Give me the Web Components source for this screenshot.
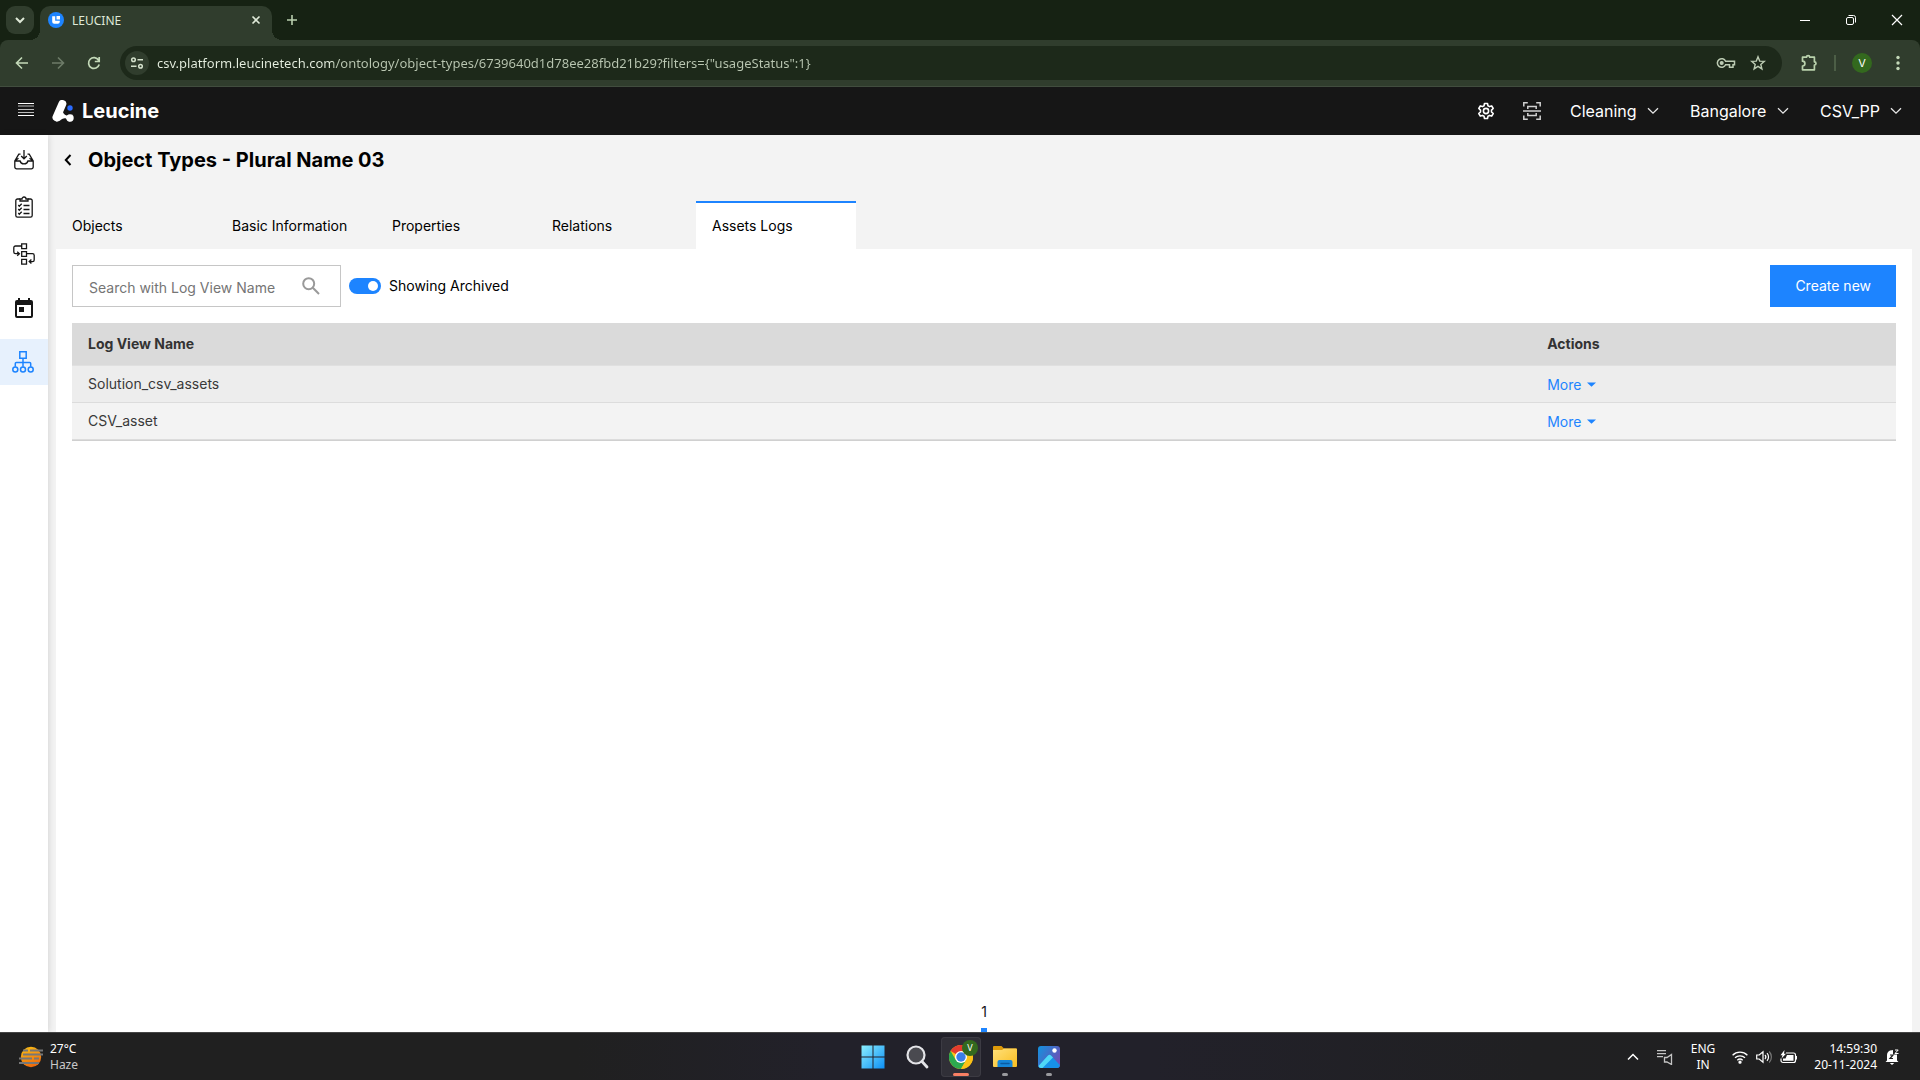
<!DOCTYPE html>
<html lang="en">
<head>
<meta charset="utf-8">
<title>LEUCINE</title>
<style>
  html, body { margin: 0; height: 100%; }
  body { display: flex; flex-direction: column; overflow: hidden; background: #162213; font-family: Inter, "Liberation Sans", sans-serif; font-size: 14px; line-height: 20px; color: #000; }
</style>
</head>
<body>
<browser-tabs></browser-tabs>
<browser-toolbar></browser-toolbar>
<app-shell>
  <app-header slot="header">
    <app-select label="Use case" value="Cleaning"></app-select>
    <app-select label="Facility" value="Bangalore"></app-select>
    <app-select label="Account" value="CSV_PP"></app-select>
  </app-header>
  <side-nav slot="nav"></side-nav>
  <page-heading>Object Types - Plural Name 03</page-heading>
  <tab-bar>
    <tab-item>Objects</tab-item>
    <tab-item>Basic Information</tab-item>
    <tab-item>Properties</tab-item>
    <tab-item>Relations</tab-item>
    <tab-item active>Assets Logs</tab-item>
  </tab-bar>
  <log-panel>
    <filter-bar slot="filters"></filter-bar>
    <log-table rows="Solution_csv_assets|CSV_asset"></log-table>
    <page-numbers slot="footer"></page-numbers>
  </log-panel>
</app-shell>
<task-bar></task-bar>

<script>
const base = `<style>
  :host, *, *::before, *::after { box-sizing: border-box; }
  button, input, select { font: inherit; color: inherit; background: none; border: 0; padding: 0; margin: 0; outline: 0; }
  button { display: inline-flex; align-items: center; justify-content: center; cursor: pointer; }
  svg { display: block; flex: none; }
</style>`;
function define(name, render) {
  customElements.define(name, class extends HTMLElement {
    constructor() {
      super();
      this.attachShadow({ mode: "open" });
    }
    connectedCallback() {
      if (!this.shadowRoot.childNodes.length) this.shadowRoot.innerHTML = base + render(this);
    }
  });
}

define("browser-tabs", () => `<style>
  :host { display: flex; align-items: flex-start; height: 40px; flex: none; background: #162213; font: 12px/18px "Noto Sans", "Open Sans", sans-serif; color: #dfe9d8; }
  .search { width: 28px; height: 28px; margin: 6px 6px 0; border-radius: 9px; background: #303d2d; }
  .tab { position: relative; display: flex; align-items: center; width: 232px; height: 34px; margin-top: 6px; padding: 0 10px 6px 8px; border-radius: 10px 10px 0 0; background: #303d2d; }
  .tab::before, .tab::after { content: ""; position: absolute; bottom: 0; width: 10px; height: 10px; }
  .tab::before { left: -10px; background: radial-gradient(circle at 0 0, transparent 10px, #303d2d 10px); }
  .tab::after { right: -10px; background: radial-gradient(circle at 100% 0, transparent 10px, #303d2d 10px); }
  .name { flex: 1; padding: 1px 0 0 8px; }
  .new { width: 28px; height: 28px; margin: 6px 0 0 6px; }
  .win { display: flex; margin-left: auto; }
  .win button { width: 46px; height: 40px; }
</style>
<button class="search" aria-label="Search tabs"><svg width="10" height="10" viewBox="0 0 10 10" fill="none" stroke="#dfe9d8" stroke-width="2"><path d="M1 3l4 4 4-4"/></svg></button>
<div class="tab">
  <svg width="16" height="16" viewBox="0 0 16 16"><circle cx="8" cy="8" r="8" fill="#1d84ff"/><path d="M4.200 4.200h3v4.600h4.600v1a2 2 0 0 1-2 2h-3.600a2 2 0 0 1-2-2z" fill="#fff"/><path d="M8.500 4h3.500v3.500H8.500z" fill="#fff"/></svg>
  <span class="name">LEUCINE</span>
  <button aria-label="Close tab"><svg width="12" height="12" viewBox="0 0 12 12" fill="none" stroke="#dfe9d8" stroke-width="1.600"><path d="M2.500 2.500l7 7M9.500 2.500l-7 7"/></svg></button>
</div>
<button class="new" aria-label="New tab"><svg width="12" height="12" viewBox="0 0 12 12" fill="none" stroke="#b9cfae" stroke-width="1.600"><path d="M6 1v10M1 6h10"/></svg></button>
<div class="win">
  <button aria-label="Minimise"><svg width="12" height="12" viewBox="0 0 12 12" stroke="#fff"><path d="M1 6.500h10"/></svg></button>
  <button aria-label="Restore"><svg width="12" height="12" viewBox="0 0 12 12" fill="none" stroke="#fff"><rect x="1.500" y="3.500" width="7" height="7" rx="1.500"/><path d="M3.500 1.500h5a2 2 0 0 1 2 2v5"/></svg></button>
  <button aria-label="Close"><svg width="12" height="12" viewBox="0 0 12 12" fill="none" stroke="#fff" stroke-width="1.200"><path d="M1 1l10 10M11 1L1 11"/></svg></button>
</div>`);

define("browser-toolbar", () => `<style>
  :host { display: flex; align-items: center; height: 47px; flex: none; padding: 0 14px 0 4px; background: #303d2d; border-bottom: 1px solid #414d3e; border-radius: 8px 8px 0 0; color: #dfe9d8; font: 14px/20px "Noto Sans", "Open Sans", sans-serif; }
  .nav { width: 36px; height: 34px; }
  .box { flex: 1; display: flex; align-items: center; height: 34px; margin: 0 18px 0 8px; padding: 0 16px 0 5px; border-radius: 17px; background: #1d291a; }
  .site { width: 24px; height: 24px; border-radius: 50%; background: #303d2d; flex: none; }
  input { flex: 1; min-width: 0; height: 24px; margin-left: 8px; font-size: 13px; background: linear-gradient(90deg, #e6efe0 176px, #bac7b2 176px); background-clip: text; -webkit-background-clip: text; -webkit-text-fill-color: transparent; }
  .key { margin-right: 14px; }
  .sep { width: 2px; height: 16px; margin: 0 16px; background: #4c5e46; }
  .me { width: 20px; height: 20px; margin-right: 18px; border-radius: 50%; background: #33691e; color: #fff; font: 11px/20px Inter, sans-serif; }
  .menu { width: 16px; height: 34px; }
</style>
<button class="nav" aria-label="Back"><svg width="14" height="14" viewBox="0 0 14 14" fill="none" stroke="#c3d9b8" stroke-width="1.600"><path d="M13 7H2M7 1.500L1.500 7 7 12.500"/></svg></button>
<button class="nav" aria-label="Forward"><svg width="14" height="14" viewBox="0 0 14 14" fill="none" stroke="#6d7b68" stroke-width="1.600"><path d="M1 7h11M7 1.500L12.500 7 7 12.500"/></svg></button>
<button class="nav" aria-label="Reload"><svg width="14" height="14" viewBox="0 0 14 14" fill="none" stroke="#c3d9b8" stroke-width="1.700"><path d="M12.200 8.500a5.400 5.400 0 1 1-.6-4.300M12.200 1v4.500H7.800"/></svg></button>
<div class="box">
  <button class="site" aria-label="Site information"><svg width="14" height="14" viewBox="0 0 14 14" fill="none" stroke="#d5e2cd" stroke-width="1.500"><circle cx="3.500" cy="3.700" r="1.800"/><path d="M7.500 3.700H13M1 10.300h5.500"/><circle cx="10.500" cy="10.300" r="1.800"/></svg></button>
  <input type="text" aria-label="Address" spellcheck="false" value="csv.platform.leucinetech.com/ontology/object-types/6739640d1d78ee28fbd21b29?filters={&quot;usageStatus&quot;:1}">
  <button class="key" aria-label="Passwords"><svg width="20" height="12" viewBox="0 0 20 12" fill="none" stroke="#bccbb3" stroke-width="1.500"><path d="M9.600 4.300H18.500V7.700H17V10.200H13.500V7.700H9.600A4.300 4.300 0 1 1 9.600 4.300z"/><circle cx="5.700" cy="6" r="1.300" fill="#bccbb3"/></svg></button>
  <button aria-label="Bookmark"><svg width="16" height="16" viewBox="0 0 16 16" fill="none" stroke="#bccbb3" stroke-width="1.400"><path d="M8 1.800l1.700 4.300 4.600.3-3.500 3 1.100 4.500L8 11.400l-3.900 2.500 1.100-4.500-3.500-3 4.600-.3z"/></svg></button>
</div>
<button aria-label="Extensions"><svg width="18" height="18" viewBox="0 0 18 18" fill="none" stroke="#b9d2ac" stroke-width="1.700"><path d="M2.500 3.200H6.500a1.600 1.600 0 0 1 3.200 0h4.700v4.600a1.600 1.600 0 0 1 0 3.200V15.800H2.500V12a2.400 2.400 0 0 0 0-4.800z" stroke-linejoin="round"/></svg></button>
<span class="sep"></span>
<button class="me" aria-label="Profile V">V</button>
<button class="menu" aria-label="Menu"><svg width="4" height="16" viewBox="0 0 4 16" fill="#c3d9b8"><circle cx="2" cy="2.500" r="1.700"/><circle cx="2" cy="8" r="1.700"/><circle cx="2" cy="13.500" r="1.700"/></svg></button>`);

define("app-shell", () => `<style>
  :host { flex: 1; min-height: 0; display: flex; flex-direction: column; background: #f3f3f3; }
  .body { flex: 1; min-height: 0; display: flex; }
  main { flex: 1; min-width: 0; display: flex; flex-direction: column; padding: 0 8px; }
</style>
<slot name="header"></slot>
<div class="body"><slot name="nav"></slot><main><slot></slot></main></div>`);

define("app-header", () => `<style>
  :host { display: flex; align-items: center; height: 48px; flex: none; padding: 0 18px; background: #161616; color: #fff; font-size: 16px; line-height: 24px; }
  .brand { display: flex; align-items: center; gap: 8px; margin-left: 18px; color: #fff; text-decoration: none; font-size: 20px; font-weight: 700; }
  .menu { margin-bottom: 4px; }
  .right { display: flex; align-items: center; gap: 31px; margin-left: auto; }
  .icons { display: flex; gap: 28px; align-items: center; margin-right: -2px; }
</style>
<button class="menu" aria-label="Menu"><svg width="16" height="13" viewBox="0 0 16 13"><path d="M0 .5h16M0 12.500h16" stroke="#fff"/><path d="M0 3h16M0 6.500h16M0 9.500h16" stroke="#bcbcbc"/></svg></button>
<a class="brand" href="#home">
  <svg width="22" height="22" viewBox="0 0 22 22"><path d="M10.300 4L4.500 17.400" stroke="#fff" stroke-width="8" stroke-linecap="round"/><path d="M4 21.500C9 22 9.500 17.500 14 18.500L18 21.800 20.500 14.500C17 17 12 16 10.500 11z" fill="#fff"/><circle cx="18" cy="18" r="3.700" fill="#fff"/><circle cx="18" cy="8" r="2.700" fill="#2a6bff"/></svg>
  <span>Leucine</span></a>
<div class="right">
  <div class="icons">
    <button aria-label="Settings"><svg width="18" height="18" viewBox="0 0 18 18" fill="none" stroke="#fff" stroke-width="1.600" stroke-linejoin="round"><path d="M7.500 1.500h3l.5 2.300 1.500.8 2.200-.7 1.500 2.600L14.500 8.100v1.800l1.700 1.600-1.500 2.600-2.200-.7-1.500.8-.5 2.300h-3L7 14.200l-1.500-.8-2.200.7-1.500-2.600 1.700-1.600V8.100L1.800 6.500l1.500-2.600 2.200.7L7 3.800z"/><circle cx="9" cy="9" r="2.600"/></svg></button>
    <button aria-label="Scan"><svg width="18" height="18" viewBox="0 0 18 18" fill="none" stroke="#d0d0d0" stroke-width="1.500"><path d="M.8 4.500V.8h4M13.200.8h4v3.700M17.200 13.500v3.700h-4M4.800 17.200h-4v-3.700M0 9h18M4.800 7V4.500h8.400V7M4.800 11v2.500h8.400V11"/></svg></button>
  </div>
  <slot></slot>
</div>`);

define("app-select", el => `<style>
  :host { display: block; }
  label { display: flex; align-items: center; gap: 10px; }
  select { appearance: none; height: 24px; cursor: pointer; }
  option { color: #000; }
</style>
<label><select aria-label="${el.getAttribute("label")}"><option>${el.getAttribute("value")}</option></select>
<svg width="12" height="8" viewBox="0 0 12 8" fill="none" stroke="#e8e8e8" stroke-width="1.300"><path d="M1 1.200l5 5 5-5"/></svg></label>`);

define("side-nav", () => `<style>
  :host { display: block; width: 48px; flex: none; background: #fff; box-shadow: 1px 0 6px rgba(0,0,0,.12); color: #161616; }
  nav { display: flex; flex-direction: column; }
  a { display: flex; align-items: center; justify-content: center; height: 46px; color: inherit; }
  .group { display: flex; flex-direction: column; gap: 1px; padding-top: 2px; }
  .cal { height: 62px; }
  .on { background: #e7f1fd; color: #1d84ff; padding-right: 2px; }
</style>
<nav>
  <div class="group">
  <a href="#inbox" aria-label="Inbox"><svg width="20" height="20" viewBox="0 0 20 20" fill="none" stroke="currentColor" stroke-width="1.300"><path d="M6.500 4.200H4.800L.8 11v6a1.800 1.800 0 0 0 1.800 1.800h14.800a1.800 1.800 0 0 0 1.800-1.800v-6l-4-6.800h-1.700M.8 11l3.700-2.800M19.200 11l-3.700-2.800M.8 11h5.300c.8 3.800 7 3.800 7.800 0h5.300M10 0v8.500M7.200 6L10 8.800 12.800 6"/></svg></a>
  <a href="#jobs" aria-label="Checklists"><svg width="18" height="22" viewBox="0 0 18 22" fill="none" stroke="currentColor" stroke-width="1.300"><path d="M5 3H2.500A1.700 1.700 0 0 0 .8 4.700v14.800a1.700 1.700 0 0 0 1.700 1.700h13a1.700 1.700 0 0 0 1.700-1.700V4.700A1.700 1.700 0 0 0 15.500 3H13"/><path d="M5 5V3h2a2 2 0 0 1 4 0h2v2z"/><path d="M8.500 9.500h6M8.500 13.500h6M8.500 17.500h6M3.300 9l1 1.200 2.400-2.500M3.300 13l1 1.200 2.400-2.500M3.300 17l1 1.200 2.400-2.500"/></svg></a>
  <a href="#flows" aria-label="Workflows"><svg width="22" height="22" viewBox="0 0 22 22" fill="none" stroke="currentColor" stroke-width="1.300"><path d="M8.700.8h4.800v4.800H8.700zM8.700 8.600h4.800v4.800H8.700zM8.700 16.400h4.800v4.800H8.700zM8.700 3H2.500A1.700 1.700 0 0 0 .8 4.700V9a1.700 1.700 0 0 0 1.700 1.700H6M4.200 8.700l2.200 2-2.200 2M13.500 10.700h6a1.700 1.700 0 0 1 1.700 1.700v4.500a1.700 1.700 0 0 1-1.700 1.700h-3M18.400 16.500l-2.200 2.100 2.200 2"/></svg></a>
  </div>
  <a class="cal" href="#schedule" aria-label="Schedule"><svg width="18" height="20" viewBox="0 0 18 20" fill="currentColor"><path fill-rule="evenodd" d="M3 0h2v2h8V0h2v2h1a2 2 0 0 1 2 2v14a2 2 0 0 1-2 2H2a2 2 0 0 1-2-2V4a2 2 0 0 1 2-2h1zM2 7v11h14V7z"/><path d="M4 9h5v5H4z"/></svg></a>
  <a class="on" href="#ontology" aria-label="Ontology"><svg width="22" height="22" viewBox="0 0 22 22" fill="none" stroke="currentColor" stroke-width="1.500"><path d="M7.800.8h6.400v6.400H7.800zM11 7.200v8.600M3.300 15.800v-3.300a1 1 0 0 1 1-1h13.400a1 1 0 0 1 1 1v3.300"/><circle cx="3.300" cy="18.500" r="2.500"/><circle cx="11" cy="18.500" r="2.500"/><circle cx="18.700" cy="18.500" r="2.500"/></svg></a>
</nav>`);

define("page-heading", () => `<style>
  :host { display: flex; align-items: center; gap: 16px; padding: 13px 8px 0; flex: none; }
  h1 { margin: 0; font-size: 20px; line-height: 24px; font-weight: 700; }
</style>
<button aria-label="Back"><svg width="8" height="12" viewBox="0 0 8 12" fill="none" stroke="#000" stroke-width="2"><path d="M6.500 1L1.800 6l4.700 5"/></svg></button>
<h1><slot></slot></h1>`);

define("tab-bar", () => `<style>:host { display: flex; flex: none; margin-top: 29px; }</style><slot></slot>`);

define("tab-item", el => `<style>
  :host { display: block; width: 160px; }
  button { width: 100%; height: 48px; justify-content: flex-start; padding: 0 16px; border-top: 2px solid transparent; }
  :host([active]) button { background: #fff; border-top-color: #1d84ff; }
</style>
<button role="tab" aria-selected="${el.hasAttribute("active")}"><slot></slot></button>`);

define("log-panel", () => `<style>
  :host { flex: 1; min-height: 0; display: flex; flex-direction: column; gap: 16px; padding: 16px 16px 0; background: #fff; }
  .foot { margin-top: auto; }
</style>
<slot name="filters"></slot><slot></slot><div class="foot"><slot name="footer"></slot></div>`);

define("filter-bar", () => `<style>
  :host { display: flex; align-items: center; gap: 8px; }
  .field { display: flex; align-items: center; width: 269px; height: 42px; padding: 0 20px 0 16px; border: 1px solid #c6c6c6; }
  .field input { flex: 1; min-width: 0; height: 22px; padding-top: 2px; }
  .field input::placeholder { color: #757575; opacity: 1; }
  .toggle { display: flex; align-items: center; gap: 8px; cursor: pointer; }
  .toggle input { appearance: none; width: 32px; height: 16px; border-radius: 8px; background: #1d84ff; display: grid; align-items: center; justify-items: end; padding-right: 3px; }
  .toggle input::before { content: ""; width: 10px; height: 10px; border-radius: 50%; background: #fff; }
  .create { height: 42px; margin-left: auto; padding: 0 25px; background: #1d84ff; color: #fff; }
</style>
<label class="field"><input type="text" aria-label="Search with Log View Name" placeholder="Search with Log View Name">
<svg width="18" height="18" viewBox="0 0 18 18" fill="none" stroke="#999" stroke-width="2"><circle cx="6.700" cy="6.700" r="5.500"/><path d="M10.800 10.800l6.200 6.200"/></svg></label>
<label class="toggle"><input type="checkbox" checked>Showing Archived</label>
<button class="create">Create new</button>`);

define("log-table", el => `<style>
  :host { display: block; }
  table { width: 100%; table-layout: fixed; border-collapse: separate; border-spacing: 0; color: #393939; border-bottom: 1px solid #d0d0d0; }
  col.name { width: 80%; }
  th { height: 43px; padding: 0 16px; text-align: left; font-weight: 700; color: #333; background: #dadada; border-bottom: 1px solid #e0e0e0; }
  td { height: 37px; padding: 0 16px; border-bottom: 1px solid #dcdcdc; background: #f3f3f3; }
  tr:nth-child(odd) td { background: #ededed; }
  td button { gap: 6px; color: #1d84ff; vertical-align: middle; }
</style>
<table><colgroup><col class="name"><col></colgroup>
<thead><tr><th>Log View Name</th><th>Actions</th></tr></thead>
<tbody>${el.getAttribute("rows").split("|").map(n => `<tr><td>${n}</td><td><button>More <svg width="9" height="5" viewBox="0 0 9 5" fill="#1d84ff"><path d="M0 .5h9L4.500 4.800z"/></svg></button></td></tr>`).join("")}</tbody></table>`);

define("page-numbers", () => `<style>
  :host { display: flex; justify-content: center; }
  a { display: flex; flex-direction: column; align-items: center; gap: 6px; color: #161616; text-decoration: none; }
  a::after { content: ""; width: 6px; height: 4px; background: #1d84ff; }
</style><a href="#page-1">1</a>`);

define("task-bar", () => `<style>
  :host { display: grid; grid-template-columns: 1fr auto 1fr; align-items: center; height: 48px; flex: none; padding: 0 21px 0 19px; border-top: 1px solid #454545; background: linear-gradient(90deg, #202020 0, #202020 30%, #22212a 43%, #22212a 60%, #202022 80%, #202020 100%); color: #fff; font: 12px/16px "Noto Sans", "Open Sans", sans-serif; }
  .weather { display: flex; align-items: center; gap: 7px; justify-self: start; text-align: left; }
  .weather small { display: block; font-size: 12px; color: #c8c8c8; }
  .apps { display: flex; padding-left: 4px; }
  .app { position: relative; width: 44px; height: 44px; }
  .app.on::before { content: ""; position: absolute; inset: 2px; border-radius: 4px; background: #302f37; box-shadow: inset 0 0 0 1px #3c3b43; }
  .app svg { position: relative; }
  .app.run::after, .app.on::after { content: ""; position: absolute; left: 50%; bottom: 3px; width: 6px; height: 3px; margin-left: -3px; border-radius: 2px; background: #9a9a9e; }
  .app.on::after { width: 16px; margin-left: -8px; background: #f98064; }
  .badge { position: absolute; top: 5px; right: 5px; width: 16px; height: 16px; border-radius: 50%; background: #33691e; font-size: 9px; line-height: 16px; color: #fff; text-align: center; }
  .tray { display: flex; align-items: center; gap: 17px; justify-self: end; }
  .net { display: flex; gap: 8px; align-items: center; }
  .time { display: flex; align-items: center; gap: 8px; }
  .clock { text-align: right; }
  .clock span { display: block; }
</style>
<button class="weather"><svg width="24" height="22" viewBox="0 0 24 22"><defs><linearGradient id="sun" x1="0" y1="0" x2=".4" y2="1"><stop offset="0" stop-color="#fcc415"/><stop offset="1" stop-color="#ef6c0c"/></linearGradient></defs><circle cx="12" cy="11" r="10.200" fill="url(#sun)"/><path d="M4 4.500h5M11 4.500h13M4 8.500h20M0 12.500h13M15 12.500h5M0 17h20" stroke="#777" stroke-width="2"/></svg><span>27°C<small>Haze</small></span></button>
<div class="apps">
  <button class="app" aria-label="Start"><svg width="24" height="24" viewBox="0 0 24 24"><defs><linearGradient id="win" x1="0" y1="0" x2="24" y2="24" gradientUnits="userSpaceOnUse"><stop offset="0" stop-color="#8df1ff"/><stop offset="1" stop-color="#0a8df5"/></linearGradient></defs><path d="M.5.5h11v11H.500zM12.500.5h11v11h-11zM.5 12.500h11v11H.500zM12.500 12.500h11v11h-11z" fill="url(#win)"/></svg></button>
  <button class="app" aria-label="Search"><svg width="24" height="24" viewBox="0 0 24 24" fill="none" stroke="#e4e4e8"><circle cx="11" cy="10" r="8.500" fill="#4a4a50" stroke-width="2.200"/><path d="M17 16.500l5 5.500" stroke-width="2.800" stroke-linecap="round"/></svg></button>
  <button class="app on" aria-label="Chrome"><svg width="24" height="24" viewBox="0 0 24 24"><circle cx="12" cy="12" r="12" fill="#fbc116"/><path d="M12 12L1.600 6A12 12 0 0 1 22.400 6H12z" fill="#e33b2e"/><path d="M12 12L17.200 15 12 24A12 12 0 0 1 1.600 6L6.800 15z" fill="#2da94f"/><path d="M12 6h10.400A12 12 0 0 1 12 24l5.200-9z" fill="#fbc116"/><circle cx="12" cy="12" r="6" fill="#fff"/><circle cx="12" cy="12" r="4.700" fill="#3b7de9"/></svg><span class="badge">V</span></button>
  <button class="app run" aria-label="File Explorer"><svg width="24" height="24" viewBox="0 0 24 24"><defs><linearGradient id="fold" x1="0" y1="0" x2="1" y2="1"><stop offset="0" stop-color="#ffe07a"/><stop offset="1" stop-color="#f9bd1f"/></linearGradient></defs><path d="M0 2a1 1 0 0 1 1-1h7.500l2.500 2.500h12a1 1 0 0 1 1 1V8H0z" fill="#dd9a0a"/><path d="M0 5h9l2-1.500h12a1 1 0 0 1 1 1V21a1 1 0 0 1-1 1H1a1 1 0 0 1-1-1z" fill="url(#fold)"/><path d="M4.500 22v-5a2 2 0 0 1 2-2h11a2 2 0 0 1 2 2v5z" fill="#1687d9"/><path d="M8 18.500h8" stroke="#0b5ca3" stroke-width="1.500" stroke-linecap="round"/></svg></button>
  <button class="app run" aria-label="Photos"><svg width="24" height="24" viewBox="0 0 24 24"><defs><linearGradient id="pho" x1="0" y1="0" x2="1" y2=".6"><stop offset="0" stop-color="#1193e0"/><stop offset="1" stop-color="#6c4fb5"/></linearGradient></defs><rect x="1" y="1" width="22" height="22" rx="3" fill="url(#pho)"/><path d="M1.500 21L11 10.500a2 2 0 0 1 3 0L22.800 20a3 3 0 0 1-2.800 3H4a3 3 0 0 1-2.500-2z" fill="#1791e8"/><path d="M1.500 21L11 10.500a2 2 0 0 1 3 0L16 12.500 5.500 23H4a3 3 0 0 1-2.500-2z" fill="#4fd8f7"/><circle cx="17.500" cy="5.500" r="2.200" fill="#fff"/></svg></button>
</div>
<div class="tray">
  <button aria-label="Hidden icons"><svg width="12" height="8" viewBox="0 0 12 8" fill="none" stroke="#fff" stroke-width="1.500"><path d="M1 6.500l5-5 5 5"/></svg></button>
  <svg width="18" height="16" viewBox="0 0 18 16" fill="none" stroke="#c4c4c4" stroke-width="1.300"><path d="M1 1.700h9M1 4.700h9M1 7.700h6M8.500 8.500v4.500h2.500l4.500 2.500v-10L11 8.500z"/></svg>
  <button aria-label="Language"><span>ENG<br>IN</span></button>
  <div class="net">
    <svg width="16" height="14" viewBox="0 0 16 14" fill="none" stroke="#fff" stroke-width="1.300"><path d="M.6 5.200a10.500 10.500 0 0 1 14.800 0M3 7.800a7.200 7.200 0 0 1 10 0M5.300 10.200a4 4 0 0 1 5.400 0"/><circle cx="8" cy="12.200" r="1" fill="#fff"/></svg>
    <svg width="16" height="14" viewBox="0 0 16 14" fill="none" stroke="#fff" stroke-width="1.200"><path d="M.7 5v4h2.500L7 12.300V1.700L3.200 5zM9 5a3 3 0 0 1 0 4M11 3.200a5.500 5.500 0 0 1 0 7.600"/><path d="M13.200 1.500a8 8 0 0 1 0 11" stroke="#777"/></svg>
    <svg width="17" height="14" viewBox="0 0 17 14"><path d="M6 3h7.500a2 2 0 0 1 2 2v5.500a2 2 0 0 1-2 2H3a2 2 0 0 1-2-2V8.500" fill="none" stroke="#fff" stroke-width="1.200"/><path d="M7 5h6.500v5.700H3V8.500h2.500zM16 6h1v3.500h-1zM4.500 0L.5 5.200h2L1.500 8.500 6 3.800H4z" fill="#fff"/></svg>
  </div>
  <div class="time">
    <div class="clock"><span>14:59:30</span><span>20-11-2024</span></div>
    <svg width="14" height="16" viewBox="0 0 14 16"><path d="M2 11.500V6a4.800 4.800 0 0 1 5-4.800L8 1v4.500h4V11.500l1.500 1.500H.5zM4.800 14h4.400L7 16z" fill="#fff"/><path d="M5 6h3L5 9.500h3" fill="none" stroke="#202020" stroke-width="1.200"/><path d="M10 1h3.200L10 4.500h3.500" fill="none" stroke="#fff"/></svg>
  </div>
</div>`);
</script>
</body>
</html>
